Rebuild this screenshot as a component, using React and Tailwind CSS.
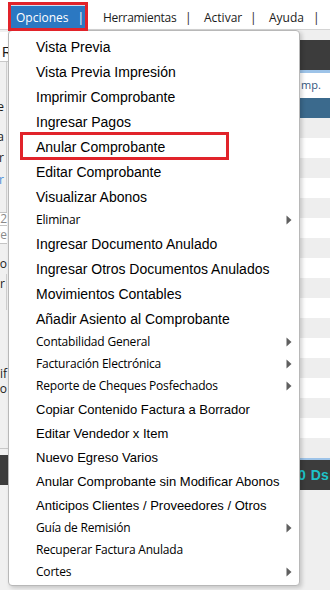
const B = "b"; // 14px Liberation Sans, 25px row
const M = "m"; // 13px Liberation Sans, 24px row
const S = "s"; // 12px Open Sans, 22px row

const items = [
  ["Vista Previa", B],
  ["Vista Previa Impresión", B],
  ["Imprimir Comprobante", B],
  ["Ingresar Pagos", B],
  ["Anular Comprobante", B, false, true],
  ["Editar Comprobante", B],
  ["Visualizar Abonos", B],
  ["Eliminar", S, true],
  ["Ingresar Documento Anulado", B],
  ["Ingresar Otros Documentos Anulados", B],
  ["Movimientos Contables", B],
  ["Añadir Asiento al Comprobante", B],
  ["Contabilidad General", S, true],
  ["Facturación Electrónica", S, true],
  ["Reporte de Cheques Posfechados", S, true],
  ["Copiar Contenido Factura a Borrador", M],
  ["Editar Vendedor x Item", M],
  ["Nuevo Egreso Varios", M],
  ["Anular Comprobante sin Modificar Abonos", M],
  ["Anticipos Clientes / Proveedores / Otros", M],
  ["Guía de Remisión", S, true],
  ["Recuperar Factura Anulada", S],
  ["Cortes", S, true],
];

function Arrow() {
  return (
    <svg width="6" height="10" viewBox="0 0 6 10" className="mr-[7px] shrink-0">
      <path d="M0.5 0.5 L5.5 5 L0.5 9.5 Z" fill="#5f5f5f" />
    </svg>
  );
}

function MenuItem({ label, kind, arrow, boxed }) {
  const cls =
    kind === B
      ? "h-[25px] text-[14px] font-['Liberation_Sans',Arial,sans-serif]"
      : kind === M
      ? "h-[24px] text-[13px] font-['Liberation_Sans',Arial,sans-serif]"
      : "h-[22px] text-[12px] font-['Open_Sans',sans-serif] tracking-[-0.2px]";
  return (
    <div className={`relative flex items-center justify-between pl-[27px] text-black leading-none ${cls}`}>
      <span className="whitespace-nowrap">{label}</span>
      {arrow ? <Arrow /> : null}
      {boxed ? (
        <div className="absolute left-[11px] top-[-2px] w-[209px] h-[28px] border-[3px] border-[#e1232a]" />
      ) : null}
    </div>
  );
}

const rows = Array.from({ length: 17 }, (_, i) => i);

export default function App() {
  return (
    <div className="relative w-[330px] h-[590px] overflow-hidden bg-[#f0f0f0] font-['Open_Sans',sans-serif]">
      {/* Top menu bar */}
      <div className="relative h-[30px] bg-white border-b border-[#d4d4d4] flex items-start text-[12px] leading-[16px] text-[#1b1b1b]">
        <div className="relative z-20 ml-[8px] mt-[2px] w-[80px] h-[29px] border-[3px] border-[#e1232a] bg-[#2b78c2] flex items-start pt-[5px] pl-[5px] text-white">
          <div className="absolute left-0 right-0 top-0 h-[1px] bg-[#cfe0f2]" />
          <span className="w-[61.5px] whitespace-nowrap">Opciones</span>
          <span>|</span>
        </div>
        <div className="flex items-start pt-[10px] ml-[15px]">
          <span className="w-[82px] whitespace-nowrap tracking-[-0.3px]">Herramientas</span>
          <span className="w-[19px]">|</span>
          <span className="w-[46px] whitespace-nowrap">Activar</span>
          <span className="w-[19px]">|</span>
          <span className="w-[44px] whitespace-nowrap">Ayuda</span>
          <span>|</span>
        </div>
      </div>

      {/* Background content */}
      <div className="flex h-[560px]">
        {/* left clipped strip */}
        <div className="w-[8px] shrink-0 overflow-hidden flex flex-col text-[12px] leading-none text-[#1b1b1b]">
          <div className="mt-[2px] h-[30px] bg-white border-b border-[#c8c8c8] flex items-start pt-[13px] pl-[2px] text-[14px] font-['Liberation_Sans',sans-serif]">
            R
          </div>
          <div className="w-[7px] h-[150px] border-r border-[#cfcfcf] flex flex-col items-end pr-[2px]">
            <div className="mt-[39px] whitespace-nowrap">Cliente</div>
            <div className="mt-[18px] whitespace-nowrap">Fecha</div>
            <div className="mt-[9px] whitespace-nowrap">Vendedor</div>
            <div className="mt-[10px] whitespace-nowrap text-[#4a8fd8]">Valor</div>
          </div>
          <div className="w-[7px] h-[14px] bg-white border-y border-[#c4c4c4] flex items-center justify-end text-[#8a8a8a]">
            <span className="whitespace-nowrap">2</span>
          </div>
          <div className="w-[7px] h-[18px] bg-white border-b border-[#c4c4c4] flex items-center justify-end text-[#8a8a8a]">
            <span className="whitespace-nowrap">Nombre</span>
          </div>
          <div className="flex justify-end w-[7px] mt-[14px]">
            <span className="whitespace-nowrap">Retiro</span>
          </div>
          <div className="w-[7px] h-[36px] border-r border-[#cfcfcf] flex justify-end items-start mt-[4px] pt-[4px] pr-[1px]">
            <span className="whitespace-nowrap">Valor</span>
          </div>
          <div className="flex justify-end w-[7px] mt-[58px]">
            <span className="whitespace-nowrap">Modif</span>
          </div>
          <div className="flex justify-end w-[7px] mt-[3px]">
            <span className="whitespace-nowrap">Punto</span>
          </div>
          <div className="mt-[53px] h-[1px] bg-[#c8c8c8]" />
          <div className="mt-[6px] h-[30px] bg-[#3c3c3c]" />
        </div>

        <div className="flex-1" />

        {/* right clipped grid */}
        <div className="w-[30px] shrink-0 flex flex-col">
          <div className="h-[10px] bg-[#efefef]" />
          <div className="h-[29.5px] bg-[#3c3c3c]" />
          <div className="h-[3px] bg-[#9dc3e8]" />
          <div className="h-[25px] bg-white flex items-center text-[11px] text-[#33557d] pl-[1px]">mp.</div>
          <div className="h-[20px] bg-[#3b6a8d]" />
          {rows.map((i) => (
            <div key={i} className={i % 2 === 0 ? "h-[20px] bg-[#eeeeee]" : "h-[20px] bg-white"} />
          ))}
          <div className="h-[2.5px] bg-[#9dc3e8]" />
          <div className="h-[30px] bg-[#3c3c3c] flex items-center text-[14px] font-bold text-[#1ec3c9] font-['Liberation_Sans',sans-serif] whitespace-nowrap">
            <span className="-ml-[2px]">0</span>
            <span className="ml-[5px]">Ds</span>
          </div>
          <div className="flex-1 bg-[#efefef]" />
        </div>
      </div>

      {/* Dropdown menu overlay */}
      <div className="absolute z-10 left-[8px] top-[30px] w-[292px] bg-white border border-[#b8b8b8] rounded-[4px] shadow-[2px_2px_4px_rgba(0,0,0,0.18)] pt-[3px] pb-[2px]">
        {items.map(([label, kind, arrow, boxed]) => (
          <MenuItem key={label} label={label} kind={kind} arrow={arrow} boxed={boxed} />
        ))}
      </div>
    </div>
  );
}
